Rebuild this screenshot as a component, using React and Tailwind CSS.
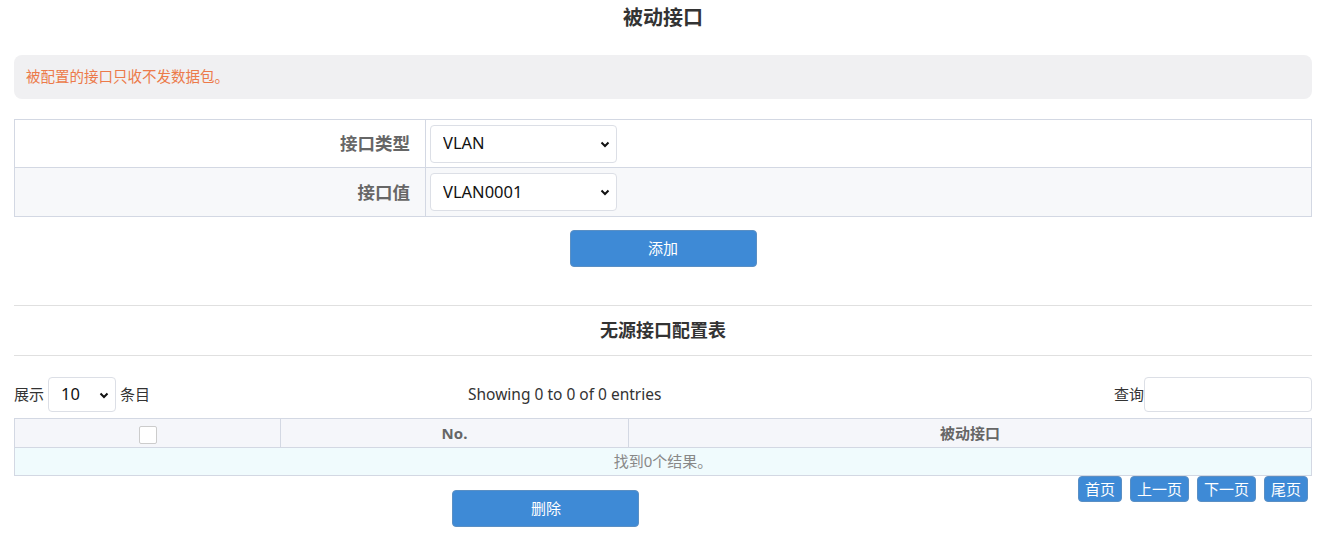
import React from "react";

const FONT = { fontFamily: '"Noto Sans", "Noto Sans CJK SC", sans-serif' };

function Chevron() {
  return (
    <svg className="pointer-events-none absolute right-[6px] top-1/2 -translate-y-1/2" width="12" height="12" viewBox="0 0 12 12" fill="none" stroke="#111" strokeWidth="2">
      <path d="M2.5 4.5L6 8L9.5 4.5" />
    </svg>
  );
}

function Select({ value, className }) {
  return (
    <div className={`relative ${className}`}>
      <select
        defaultValue={value}
        className="h-full w-full appearance-none rounded-[4px] border border-[#dcdfe6] bg-white pl-[12px] pr-6 text-[16.5px] text-[#111] outline-none"
      >
        <option>{value}</option>
      </select>
      <Chevron />
    </div>
  );
}

function PageBtn({ children }) {
  return (
    <button className="h-[26px] rounded-[4px] border border-[#5a8fc4] bg-[#3e8ad6] px-[6px] text-[15px] leading-none text-white">
      {children}
    </button>
  );
}

export default function App() {
  return (
    <div className="min-h-screen bg-white px-[14px] text-[15px] text-[#333]" style={FONT}>
      <h1 className="pt-[4px] text-center text-[20px] font-bold leading-[28px] text-[#333]">被动接口</h1>

      <div className="mt-[23px] flex h-[44px] items-center rounded-[8px] bg-[#f0f0f2] px-[12px] text-[14.5px] text-[#ec7a4a]">
        被配置的接口只收不发数据包。
      </div>

      <table className="mt-[20px] w-full border-collapse border border-[#d3d8e3]">
        <tbody>
          <tr className="h-[48px] bg-white">
            <td className="w-[411px] border border-[#d3d8e3] pr-[15px] text-right text-[17.5px] font-bold text-[#666]">接口类型</td>
            <td className="border border-[#d3d8e3] pl-[4px]">
              <Select value="VLAN" className="h-[38px] w-[187px]" />
            </td>
          </tr>
          <tr className="h-[49px] bg-[#f7f8fa]">
            <td className="border border-[#d3d8e3] pr-[15px] text-right text-[17.5px] font-bold text-[#666]">接口值</td>
            <td className="border border-[#d3d8e3] pl-[4px]">
              <Select value="VLAN0001" className="h-[38px] w-[187px]" />
            </td>
          </tr>
        </tbody>
      </table>

      <div className="mt-[13px] flex justify-center">
        <button className="h-[37px] w-[187px] rounded-[4px] border border-[#5a8fc4] bg-[#3e8ad6] text-[15px] text-white">添加</button>
      </div>

      <div className="mt-[38px] border-t border-[#e0e0e0]" />
      <h2 className="py-[11px] text-center text-[18px] font-bold leading-[27px] text-[#333]">无源接口配置表</h2>
      <div className="border-t border-[#e0e0e0]" />

      <div className="mt-[21px] flex h-[35px] items-center text-[15px] text-[#333]">
        <div className="flex w-[300px] items-center">
          <span>展示</span>
          <Select value="10" className="mx-[4px] h-[35px] w-[68px]" />
          <span>条目</span>
        </div>
        <div className="flex-1 pl-[154px] text-[15.5px] text-[#333]">Showing 0 to 0 of 0 entries</div>
        <div className="flex items-center">
          <span>查询</span>
          <input className="h-[35px] w-[168px] rounded-[4px] border border-[#dcdfe6] outline-none" />
        </div>
      </div>

      <table className="mt-[6px] w-full border-collapse border border-[#d3d8e3] text-[15px]">
        <thead>
          <tr className="h-[29px] bg-[#f5f6fa] text-[#666]">
            <th className="w-[266px] border border-[#d3d8e3]">
              <span className="inline-block h-[18px] w-[18px] rounded-[2px] border border-[#ccc] bg-white align-middle" />
            </th>
            <th className="w-[348px] border border-[#d3d8e3] font-bold">No.</th>
            <th className="border border-[#d3d8e3] font-bold">被动接口</th>
          </tr>
        </thead>
        <tbody>
          <tr className="h-[28px] bg-[#f0fbfd]">
            <td colSpan={3} className="border border-[#d3d8e3] text-center text-[#888]">找到0个结果。</td>
          </tr>
        </tbody>
      </table>

      <div className="flex">
        <div className="flex flex-1 justify-center pt-[14px]">
          <button className="h-[37px] w-[187px] rounded-[4px] border border-[#5a8fc4] bg-[#3e8ad6] text-[15px] text-white">删除</button>
        </div>
        <div className="flex gap-[8px] pr-[4px]">
          <PageBtn>首页</PageBtn>
          <PageBtn>上一页</PageBtn>
          <PageBtn>下一页</PageBtn>
          <PageBtn>尾页</PageBtn>
        </div>
      </div>
    </div>
  );
}
